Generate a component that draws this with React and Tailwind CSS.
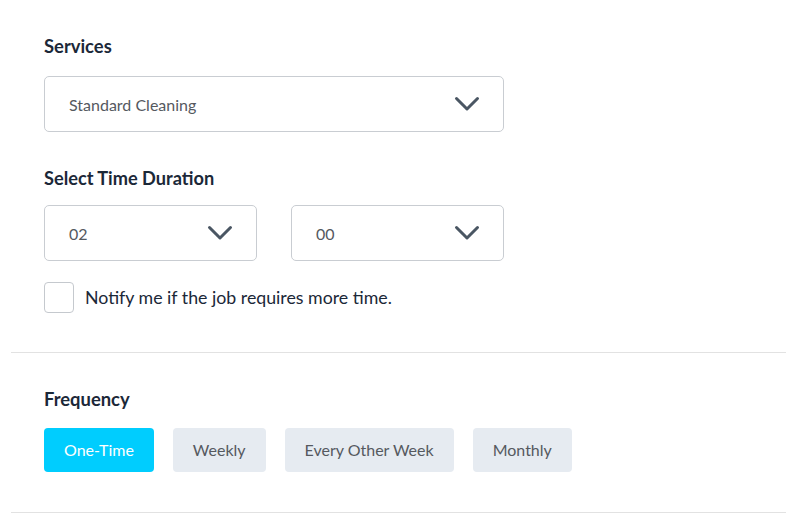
import React from "react";

function Chevron() {
  return (
    <svg width="26" height="16" viewBox="0 0 26 16" fill="none">
      <path d="M2.5 2.5 L13 13 L23.5 2.5" stroke="#4a5663" strokeWidth="3" strokeLinecap="round" strokeLinejoin="round" />
    </svg>
  );
}

function Select({ value, className }) {
  return (
    <div className={`h-[56px] rounded-[5px] border border-[#c9cdd2] bg-white flex items-center justify-between pl-[24px] pr-[23px] ${className}`}>
      <span className="text-[16px] leading-[20px] pt-[1px] text-[#55595f]">{value}</span>
      <Chevron />
    </div>
  );
}

export default function App() {
  const freq = ["One-Time", "Weekly", "Every Other Week", "Monthly"];
  return (
    <div className="w-[804px] h-[516px] bg-white overflow-hidden" style={{ fontFamily: "Lato, 'Open Sans', sans-serif" }}>
      <div className="px-[11px]">
        <div className="px-[33px] pt-[34px]">
          <h2 className="text-[18.4px] leading-[24px] font-bold text-[#1b2838]">Services</h2>
          <Select value="Standard Cleaning" className="mt-[18px] w-[460px]" />
          <h2 className="mt-[34px] text-[18.2px] leading-[24px] font-bold text-[#1b2838]">Select Time Duration</h2>
          <div className="mt-[15px] flex gap-[34px]">
            <Select value="02" className="w-[213px]" />
            <Select value="00" className="w-[213px]" />
          </div>
          <div className="mt-[21px] flex items-center gap-[11px]">
            <div className="w-[30px] h-[31px] rounded-[4px] border border-[#c5c9ce] bg-white" />
            <span className="text-[17.75px] text-[#1b2838]">Notify me if the job requires more time.</span>
          </div>
        </div>
        <div className="mt-[39px] h-[1px] w-[775px] bg-[#e2e2e2]" />
        <div className="px-[33px] pt-[34px]">
          <h2 className="text-[18.4px] leading-[24px] font-bold text-[#1b2838]">Frequency</h2>
          <div className="mt-[17px] flex gap-[19px]">
            {freq.map((f, i) => (
              <div
                key={f}
                className={`h-[44px] px-[20px] rounded-[4px] flex items-center text-[16px] ${i === 0 ? "bg-[#00cdfe] text-white" : "bg-[#e6ebf1] text-[#55595f]"}`}
              >
                {f}
              </div>
            ))}
          </div>
        </div>
        <div className="mt-[40px] h-[1px] w-[775px] bg-[#e2e2e2]" />
      </div>
    </div>
  );
}
